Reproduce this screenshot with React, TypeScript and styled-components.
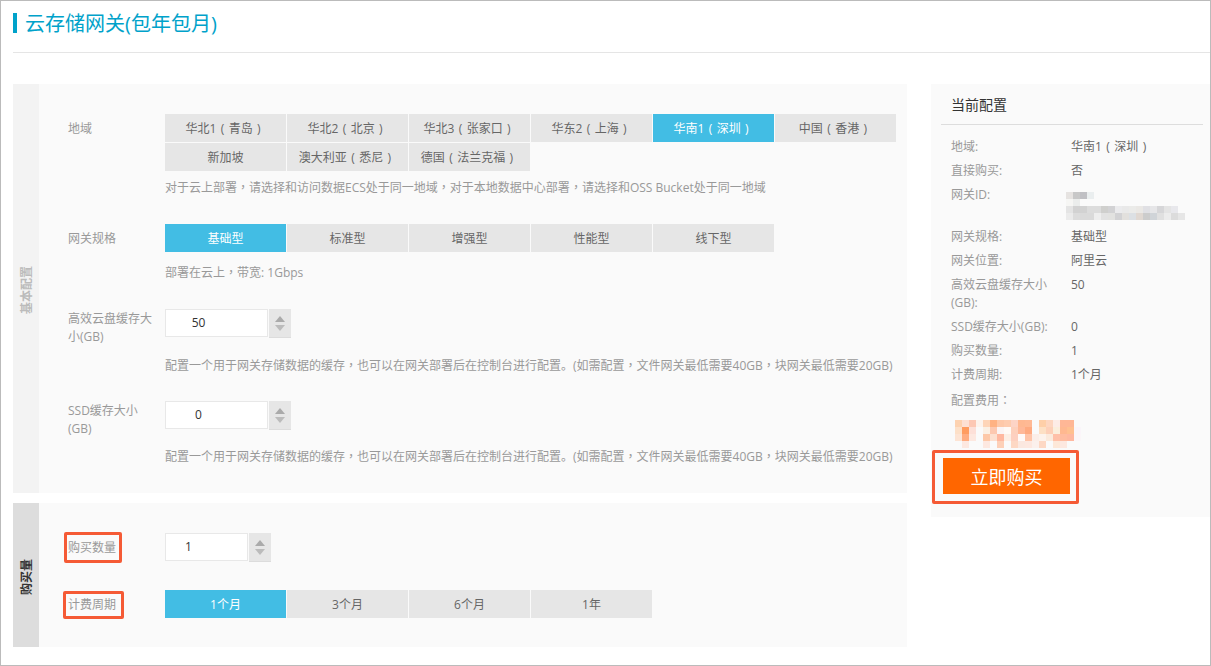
import React from "react";
import styled, { createGlobalStyle } from "styled-components";

const GlobalStyle = createGlobalStyle`
  html, body { margin: 0; padding: 0; background: #fff; }
  body { font-family: "Open Sans", "Noto Sans CJK SC", sans-serif; font-size: 12px; color: #666; }
  * { box-sizing: border-box; }
`;

const Page = styled.div`
  width: 1211px;
  height: 666px;
  border: 1px solid #bbb;
  padding: 12px 0 0 12px;
  overflow: hidden;
  background: #fff;
`;

const Header = styled.header`
  height: 40px;
  border-bottom: 1px solid #e5e5e5;
  margin-bottom: 31px;
`;

const Title = styled.h1`
  margin: 0;
  height: 20px;
  padding-left: 8px;
  border-left: 4px solid #00a2ca;
  font-size: 20px;
  line-height: 22px;
  font-weight: 400;
  color: #00a2ca;
`;

const Columns = styled.div`
  display: flex;
  gap: 24px;
  align-items: flex-start;
`;

const LeftColumn = styled.div`
  width: 894px;
  display: flex;
  flex-direction: column;
  gap: 10px;
`;

const Section = styled.section`
  display: flex;
  background: #fafafa;
`;

const Rail = styled.div<{ $strong?: boolean }>`
  width: 26px;
  flex: none;
  display: flex;
  align-items: center;
  justify-content: center;
  padding: 4px 0 0 2px;
  background: ${(p) => (p.$strong ? "#dddddd" : "#f3f3f3")};
  color: ${(p) => (p.$strong ? "#333" : "#bbb")};
  font-size: 12px;
  font-weight: 700;
`;

const RailText = styled.span`
  writing-mode: vertical-rl;
  text-orientation: sideways;
  transform: rotate(180deg);
  line-height: 12px;
`;

const Fields = styled.div<{ $gap: number; $bottom: number }>`
  flex: 1;
  display: flex;
  flex-direction: column;
  gap: ${(p) => p.$gap}px;
  padding: 30px 0 ${(p) => p.$bottom}px 29px;
`;

const Field = styled.div`
  display: flex;
  align-items: flex-start;
`;

const Label = styled.div<{ $tall?: boolean }>`
  position: relative;
  width: 97px;
  flex: none;
  padding: ${(p) => (p.$tall ? 1 : 6)}px 8px 0 0;
  line-height: 18px;
  color: #999;
`;

const Mark = styled.span<{ $wide?: boolean }>`
  position: absolute;
  left: ${(p) => (p.$wide ? -5 : -4)}px;
  top: ${(p) => (p.$wide ? 1 : -1)}px;
  width: ${(p) => (p.$wide ? 61 : 58)}px;
  height: ${(p) => (p.$wide ? 28 : 31)}px;
  border: 3px solid #f55a35;
  border-radius: 2px;
`;

const Control = styled.div`
  flex: 1;
  min-width: 0;
`;

const Options = styled.div`
  display: flex;
  flex-wrap: wrap;
  gap: 1px;
  width: 732px;
`;

const Option = styled.button<{ $active?: boolean; $paren?: boolean }>`
  width: 121px;
  height: 28px;
  border: 0;
  padding: 1px ${(p) => (p.$paren ? 5 : 0)}px 0 0;
  font: inherit;
  line-height: 27px;
  word-spacing: 1.3px;
  text-align: center;
  background: ${(p) => (p.$active ? "#42bde4" : "#e6e6e6")};
  color: ${(p) => (p.$active ? "#fff" : "#666")};
`;

const Hint = styled.p<{ $top: number; $bottom?: number }>`
  margin: ${(p) => p.$top}px 0 ${(p) => p.$bottom ?? 0}px;
  line-height: 20px;
  color: #999;
  white-space: nowrap;
`;

const PunctMark = styled.span`
  font-family: "Noto Sans CJK TC", sans-serif;
  line-height: 1;
`;

const Stepper = styled.div`
  display: flex;
  gap: 1px;
`;

const NumberBox = styled.div<{ $width: number }>`
  width: ${(p) => p.$width}px;
  height: 28px;
  padding-right: 36px;
  border: 1px solid #e8e8e8;
  background: #fff;
  color: #333;
  line-height: 26px;
  text-align: center;
`;

const Spinner = styled.div`
  width: 22px;
  height: 29px;
  display: flex;
  flex-direction: column;
  align-items: center;
  justify-content: center;
  gap: 3px;
  background: #e6e6e6;
  border-bottom: 1px solid #dcdcdc;
`;

const ArrowUp = styled.span`
  width: 0;
  height: 0;
  border-left: 5px solid transparent;
  border-right: 5px solid transparent;
  border-bottom: 6px solid #aaa;
`;

const ArrowDown = styled.span`
  width: 0;
  height: 0;
  border-left: 5px solid transparent;
  border-right: 5px solid transparent;
  border-top: 6px solid #bbb;
`;

const Summary = styled.aside`
  flex: 1;
  height: 433px;
  background: #fafafa;
`;

const SummaryTitle = styled.h2`
  margin: 0 7px 0 10px;
  height: 41px;
  padding: 11px 0 0 10px;
  border-bottom: 1px solid #ddd;
  font-size: 14px;
  line-height: 20px;
  font-weight: 400;
  color: #333;
`;

const SummaryList = styled.dl`
  margin: 13px 0 0;
  padding-left: 20px;
  display: grid;
  grid-template-columns: 120px 1fr;
  row-gap: 6px;
  line-height: 18px;
`;

const Key = styled.dt`
  padding-right: 20px;
  color: #999;
`;

const Value = styled.dd`
  margin: 0;
  color: #666;
  word-spacing: 1.3px;
`;

const IdValue = styled(Value)`
  height: 36px;
  margin-left: -5px;
  padding-top: 6px;
`;

const CostLabel = styled.div`
  height: 18px;
  margin: 8px 0 0 20px;
  line-height: 18px;
  color: #999;
`;

const PriceBlur = styled.div`
  height: 28px;
  margin: 10px 0 0 24px;
`;

const BuyBox = styled.div`
  width: 147px;
  height: 54px;
  margin: 2px 0 0 1px;
  padding: 5px 0 0 8px;
  border: 3px solid #f55a35;
  border-radius: 2px;
  background: #fafafa;
`;

const BuyButton = styled.button`
  width: 127px;
  height: 36px;
  border: 0;
  padding: 0;
  background: #ff6600;
  color: #fff;
  font: inherit;
  font-size: 18px;
`;

const Mosaic = ({ rows }: { rows: string[][] }) => (
  <svg
    width={rows[0].length * 7 + 7}
    height={rows.length * 7}
    viewBox={`0 0 ${rows[0].length * 7 + 7} ${rows.length * 7}`}
    style={{ display: "block" }}
    shapeRendering="crispEdges"
  >
    {rows.map((row, y) =>
      row.map((c, x) => <rect key={`${x}-${y}`} x={x * 7} y={y * 7} width="7" height="7" fill={c} />)
    )}
  </svg>
);

const idRows = [
  ["#e6e3e1", "#c8c8c8", "#c0c0c4", "#eaeeef", "none", "none", "none", "none", "none", "none", "none", "none", "none", "none", "none", "none", "none"],
  ["#f6f6f4", "#ebedec", "none", "none", "none", "none", "none", "none", "none", "none", "none", "none", "none", "none", "none", "none", "none"],
  ["#e4e4e4", "#d2d2d2", "#d2d2d2", "#dcdcdc", "#dcdcdc", "#cfcfcd", "#d2d2d4", "#ebebed", "#e9e9e9", "#ebebe9", "#eae8e5", "#e0e0e4", "#e6e6e8", "#d6d6d8", "#e4e4e4", "#e8e8ec", "none"],
  ["#ebebeb", "#dcdcdc", "#dadada", "#dadada", "#eeeeee", "#e2e2e2", "#e2e2e0", "#d2d2d4", "#e2e0dd", "#dce0e4", "#e0d8d2", "#cccccc", "#d0d4d8", "#e0e0e0", "#ececec", "#dcdcdc", "#e6e6e6"],
];

const priceRows = [
  ["#fdd2b0", "#fde0d4", "#fdc8b4", "#fdf3ec", "#fed5b8", "#ffb283", "#fec8a8", "#feccaf", "#fdd4c6", "#ffb891", "#ffb994", "none", "#fecfa8", "#fdd6c0", "#fdece6", "#ffb796", "#ffb796", "none"],
  ["#fde0c8", "#ff9c60", "#fde0d8", "none", "#fbf0e4", "#fdc8b0", "#fbf4f4", "#fffaf6", "#fdd0bc", "#ffb898", "#ffaa80", "none", "#fde0c4", "#fdd0b8", "#fbeedc", "#ffb890", "#ffc090", "#faf5fa"],
  ["#fde4d4", "#ffac80", "#fde8e0", "none", "#fdc8a8", "#fde0d0", "#ffb8a0", "#fdeee4", "#fdd0c0", "#fffaf8", "#ffc4a8", "#fbeee8", "#fdf3ec", "#fbeadc", "#ffc0a8", "#ffbca0", "#ffb8a0", "#fbf6f8"],
  ["none", "#fde8e0", "none", "none", "#fde8e0", "none", "#fdd0b8", "none", "#fdd8c4", "#fbe8e0", "#fde8e0", "#fbf0ec", "#fdd8c4", "none", "#fde8d8", "#fde8e0", "none", "none"],
];

const regions = ["华北1 ( 青岛 )", "华北2 ( 北京 )", "华北3 ( 张家口 )", "华东2 ( 上海 )", "华南1 ( 深圳 )", "中国 ( 香港 )", "新加坡", "澳大利亚 ( 悉尼 )", "德国 ( 法兰克福 )"];
const specs = ["基础型", "标准型", "增强型", "性能型", "线下型"];
const periods = ["1个月", "3个月", "6个月", "1年"];

const Comma = () => <PunctMark>{"\uFF0C"}</PunctMark>;
const Colon = () => <PunctMark>{"\uFF1A"}</PunctMark>;

const CacheHint = () => (
  <>
    配置一个用于网关存储数据的缓存<Comma />也可以在网关部署后在控制台进行配置。(如需配置<Comma />文件网关最低需要40GB<Comma />块网关最低需要20GB)
  </>
);

const NumberField = ({ value, width }: { value: string; width: number }) => (
  <Stepper>
    <NumberBox $width={width}>{value}</NumberBox>
    <Spinner>
      <ArrowUp />
      <ArrowDown />
    </Spinner>
  </Stepper>
);

export default function App() {
  return (
    <Page>
      <GlobalStyle />
      <Header>
        <Title>云存储网关(包年包月)</Title>
      </Header>
      <Columns>
        <LeftColumn>
          <Section>
            <Rail>
              <RailText>基本配置</RailText>
            </Rail>
            <Fields $gap={26} $bottom={26}>
              <Field>
                <Label>地域</Label>
                <Control>
                  <Options>
                    {regions.map((r) => (
                      <Option key={r} $active={r.startsWith("华南1")} $paren={r.includes("(")}>{r}</Option>
                    ))}
                  </Options>
                  <Hint $top={7}>对于云上部署<Comma />请选择和访问数据ECS处于同一地域<Comma />对于本地数据中心部署<Comma />请选择和OSS Bucket处于同一地域</Hint>
                </Control>
              </Field>
              <Field>
                <Label>网关规格</Label>
                <Control>
                  <Options>
                    {specs.map((s) => (
                      <Option key={s} $active={s === "基础型"}>{s}</Option>
                    ))}
                  </Options>
                  <Hint $top={11}>部署在云上<Comma />带宽: 1Gbps</Hint>
                </Control>
              </Field>
              <Field>
                <Label $tall>高效云盘缓存大小(GB)</Label>
                <Control>
                  <NumberField value="50" width={103} />
                  <Hint $top={18} $bottom={-1}><CacheHint /></Hint>
                </Control>
              </Field>
              <Field>
                <Label $tall>SSD缓存大小(GB)</Label>
                <Control>
                  <NumberField value="0" width={103} />
                  <Hint $top={17}><CacheHint /></Hint>
                </Control>
              </Field>
            </Fields>
          </Section>
          <Section>
            <Rail $strong>
              <RailText>购买量</RailText>
            </Rail>
            <Fields $gap={28} $bottom={29}>
              <Field>
                <Label>购买数量<Mark /></Label>
                <NumberField value="1" width={83} />
              </Field>
              <Field>
                <Label>计费周期<Mark $wide /></Label>
                <Options>
                  {periods.map((p) => (
                    <Option key={p} $active={p === "1个月"}>{p}</Option>
                  ))}
                </Options>
              </Field>
            </Fields>
          </Section>
        </LeftColumn>
        <Summary>
          <SummaryTitle>当前配置</SummaryTitle>
          <SummaryList>
            <Key>地域:</Key>
            <Value>华南1 ( 深圳 )</Value>
            <Key>直接购买:</Key>
            <Value>否</Value>
            <Key>网关ID:</Key>
            <IdValue>
              <Mosaic rows={idRows} />
            </IdValue>
            <Key>网关规格:</Key>
            <Value>基础型</Value>
            <Key>网关位置:</Key>
            <Value>阿里云</Value>
            <Key>高效云盘缓存大小(GB):</Key>
            <Value>50</Value>
            <Key>SSD缓存大小(GB):</Key>
            <Value>0</Value>
            <Key>购买数量:</Key>
            <Value>1</Value>
            <Key>计费周期:</Key>
            <Value>1个月</Value>
          </SummaryList>
          <CostLabel>配置费用<Colon /></CostLabel>
          <PriceBlur>
            <Mosaic rows={priceRows} />
          </PriceBlur>
          <BuyBox>
            <BuyButton>立即购买</BuyButton>
          </BuyBox>
        </Summary>
      </Columns>
    </Page>
  );
}
